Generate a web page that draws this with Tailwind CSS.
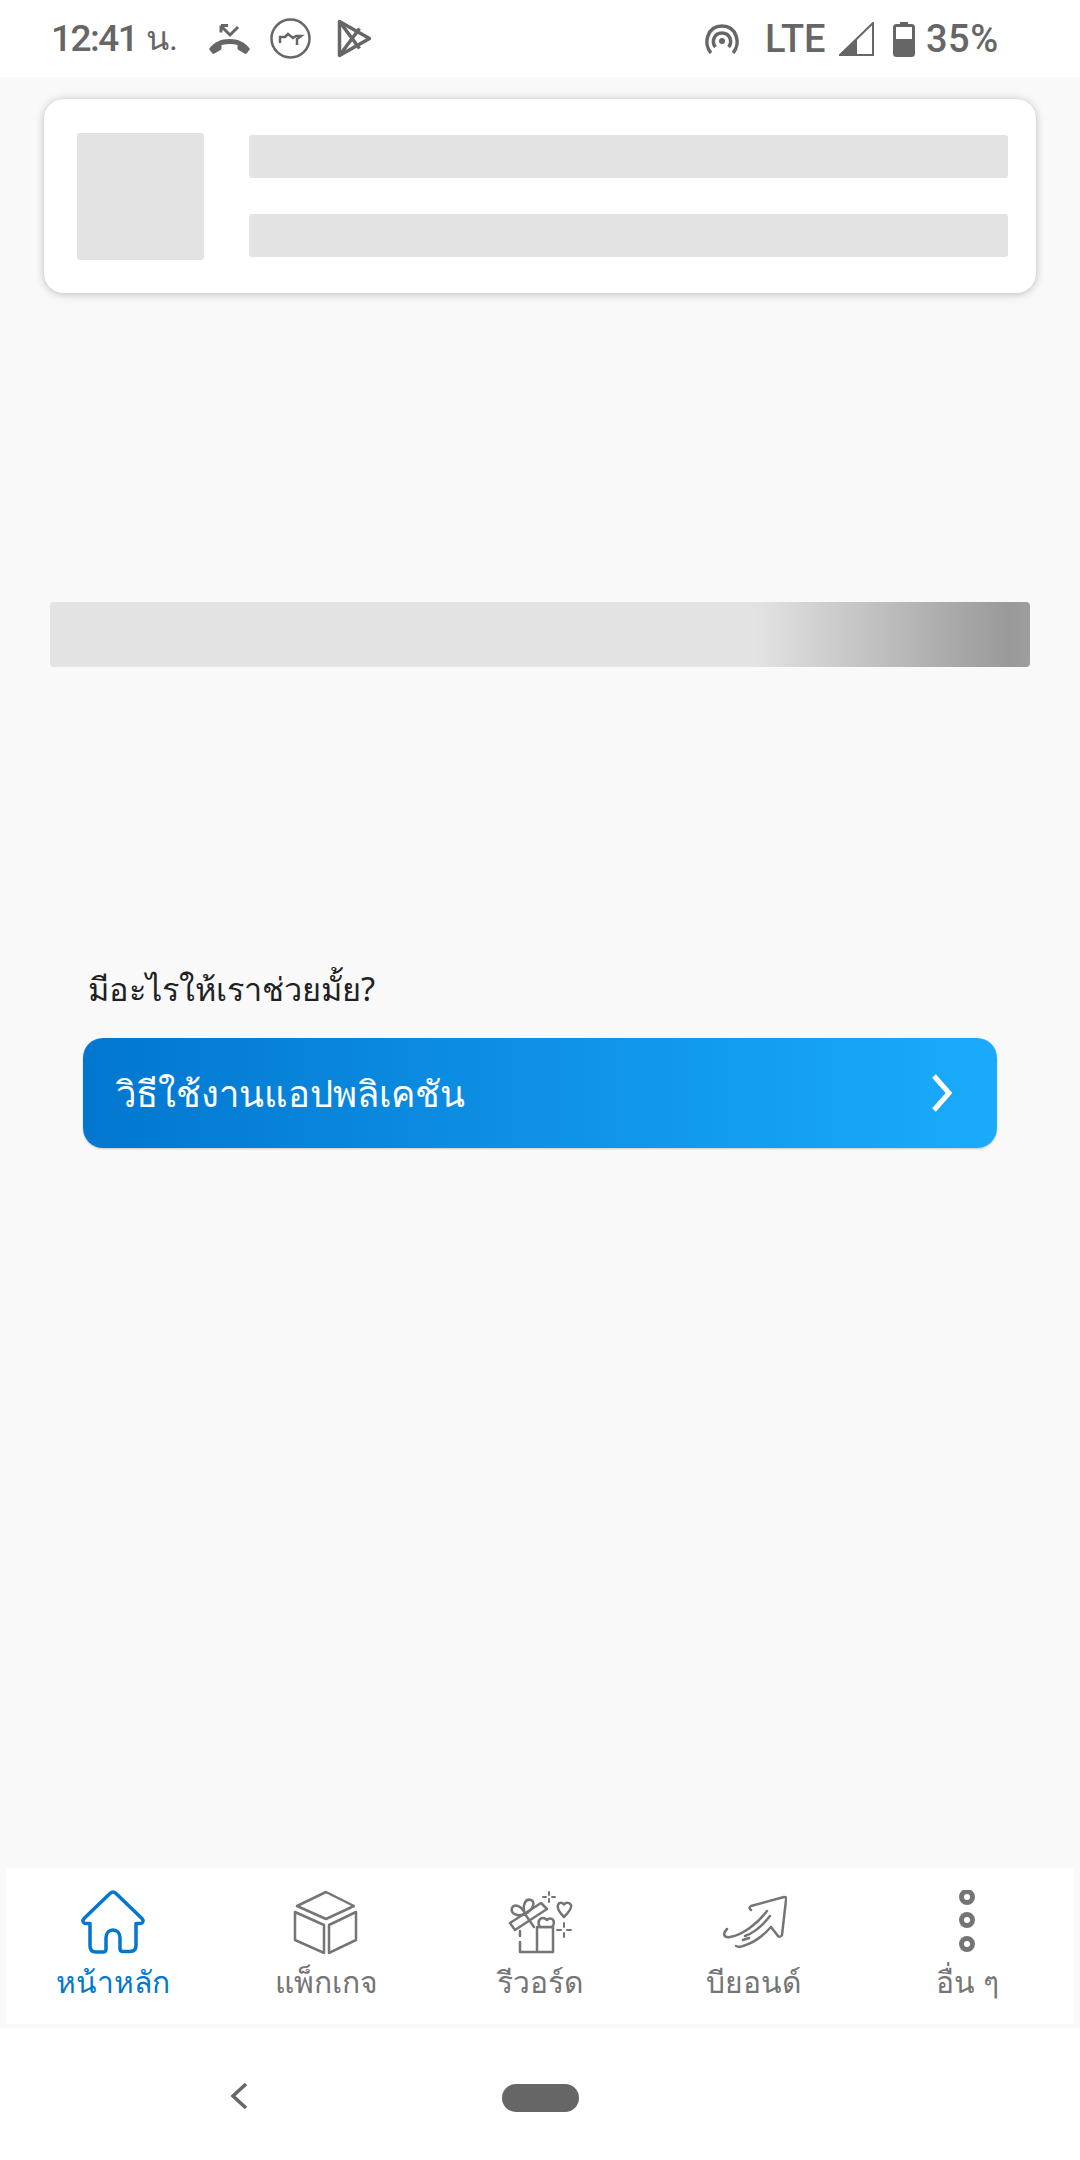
<!DOCTYPE html>
<html lang="th">
<head>
  <meta charset="UTF-8">
  <meta name="viewport" content="width=device-width, initial-scale=1">
  <title>Home loading</title>
  <script src="https://cdn.jsdelivr.net/npm/@tailwindcss/browser@4"></script>
</head>
<body class="bg-white">
<div class="w-[1080px] h-[2160px] flex flex-col bg-[#f9f9f9] overflow-hidden font-['Noto_Sans','Roboto',sans-serif]">

  <!-- Status bar -->
  <div class="h-[77px] bg-white flex items-center justify-between pl-[51px] pr-[78px] text-[#666666] font-['Roboto',sans-serif] shrink-0">
    <div class="flex items-center">
      <span class="w-[87px] text-[37px] font-medium tracking-[-1.500px] whitespace-nowrap">12:41</span>
      <span class="text-[34px] ml-[8px] w-[63px]">น.</span>
      <!-- missed call -->
      <svg class="w-[41px] h-[30px]" viewBox="0 0 41 30">
        <path d="M0 25c5-7 12-10 20.500-10S36 18 41 25l-3 4c-.5 1-1.500 1-2.500.5l-6-3.500c-.8-.5-1-1.200-1-2v-3c-5-1.500-10-1.500-16 0v3c0 .8-.2 1.500-1 2l-6 3.500c-1 .5-2 .5-2.500-.5z" fill="#666666"/>
        <path d="M12 2l9 9 8-8M12 1.500h7M12 1.500v7" fill="none" stroke="#666666" stroke-width="3"/>
      </svg>
      <!-- messenger -->
      <svg class="ml-[20px] w-[41px] h-[41px]" viewBox="0 0 41 41" fill="none" stroke="#666666" stroke-width="2.500">
        <circle cx="20.500" cy="20.500" r="19"/>
        <path d="M10 25v-6h5l3-3 5 4 3-2h5l-4 3v6"/>
      </svg>
      <!-- play store -->
      <svg class="ml-[26px] w-[35px] h-[39px]" viewBox="0 0 35 39" fill="none" stroke="#666666" stroke-width="3.500" stroke-linejoin="round">
        <path d="M2.500 2.500l30 17-30 17z"/>
        <path d="M2.500 2.500l20 27M2.500 36.500l20-27"/>
      </svg>
    </div>
    <div class="flex items-center">
      <!-- hotspot -->
      <svg class="w-[36px] h-[30px]" viewBox="0 0 36 30" fill="none" stroke="#666666" stroke-width="3.500">
        <path d="M7 29C-1 20 3 2 18 2s19 18 11 27"/>
        <path d="M11.500 23C7 18 10 9 18 9s11 9 6.500 14"/>
        <circle cx="18" cy="17" r="3" fill="#666666" stroke="none"/>
      </svg>
      <span class="ml-[25px] w-[62px] text-[38px] font-medium leading-none">LTE</span>
      <svg class="ml-[12px] w-[35px] h-[34px]" viewBox="0 0 35 34">
        <path d="M34 1v32H1z" fill="none" stroke="#666666" stroke-width="2"/>
        <path d="M18 17v16H1z" fill="#666666"/>
      </svg>
      <svg class="ml-[19px] w-[22px] h-[36px]" viewBox="0 0 22 36">
        <path d="M7 1h8v3h-8z" fill="#666666"/>
        <rect x="1.500" y="4.500" width="19" height="30" rx="2" fill="none" stroke="#666666" stroke-width="3"/>
        <rect x="1" y="18" width="20" height="17" rx="2" fill="#666666"/>
      </svg>
      <span class="ml-[11px] w-[76px] text-[38px] font-medium leading-none tracking-[0.5px] whitespace-nowrap">35%</span>
    </div>
  </div>

  <!-- Profile skeleton card -->
  <div class="mt-[22px] mx-[44px] h-[194px] bg-white rounded-[20px] shadow-[0_1px_8px_rgba(0,0,0,0.25)] flex items-center pl-[33px] pr-[28px] shrink-0">
    <div class="w-[127px] h-[127px] bg-[#e3e3e3] rounded-[3px] shrink-0"></div>
    <div class="ml-[45px] flex-1 flex flex-col gap-[36px]">
      <div class="h-[43px] bg-[#e3e3e3] rounded-[3px]"></div>
      <div class="h-[43px] bg-[#e3e3e3] rounded-[3px]"></div>
    </div>
  </div>

  <!-- Banner skeleton -->
  <div class="mt-[309px] mx-[50px] h-[65px] rounded-[4px] bg-[linear-gradient(90deg,#e3e3e3_0%,#e3e3e3_72%,#999999_98%,#9e9e9e_100%)] shrink-0"></div>

  <!-- Help section -->
  <div class="mt-[300px] ml-[88px] text-[32.500px] leading-[44px] text-[#212121] shrink-0">มีอะไรให้เราช่วยมั้ย?</div>
  <div class="mt-[27px] mx-[83px] h-[110px] rounded-[20px] bg-[linear-gradient(90deg,#0277cf_0%,#1aabfd_100%)] shadow-[0_1px_2px_rgba(0,0,0,0.2)] flex items-center justify-between pl-[33px] pr-[44px] shrink-0">
    <span class="text-[36.500px] text-white">วิธีใช้งานแอปพลิเคชัน</span>
    <svg class="w-[22px] h-[38px]" viewBox="0 0 22 38" fill="none" stroke="#ffffff" stroke-width="5">
      <path d="M3 2l15 17L3 36"/>
    </svg>
  </div>

  <!-- Bottom tab bar -->
  <div class="mt-auto mx-[6px] h-[156px] bg-white grid grid-cols-5 shrink-0 text-[#757575] text-[30px]">
    <div class="flex flex-col items-center pt-[22px]">
      <svg class="w-[66px] h-[64px]" viewBox="0 0 66 64" fill="none" stroke="#0277cf" stroke-width="3.500" stroke-linejoin="round">
        <path d="M33 2c1 0 2 .5 3 1.500l26 25c2 2 1 5-2 5h-4v22c0 4-2 6-6 6h-7c-2 0-3-1-3-3V48c0-5-3-8-7-8s-7 3-7 8v11c0 2-1 3-3 3h-7c-4 0-6-2-6-6V33.500H6c-3 0-4-3-2-5l26-25C31 2.500 32 2 33 2z"/>
      </svg>
      <span class="text-[#0277cf] leading-[38px] mt-[9px]">หน้าหลัก</span>
    </div>
    <div class="flex flex-col items-center pt-[22px]">
      <svg class="w-[66px] h-[64px]" viewBox="0 0 66 64" fill="none" stroke="#757575" stroke-width="2.500" stroke-linejoin="round">
        <path d="M33 2l28 14-28 13L4 16z"/>
        <path d="M2 22l29 13v28L2 50z"/>
        <path d="M63 22L36 35v28l27-13z"/>
      </svg>
      <span class="leading-[38px] mt-[9px]">แพ็กเกจ</span>
    </div>
    <div class="flex flex-col items-center pt-[22px]">
      <svg class="w-[66px] h-[64px]" viewBox="0 0 66 64" fill="none" stroke="#757575" stroke-width="2.500" stroke-linecap="round" stroke-linejoin="round">
        <path d="M3 33l31-20 6 6-32 21z"/>
        <path d="M18 24c-7 3-15 0-13-6 2-5 10-2 13 6zM18 24c-3-8 0-16 6-14 5 2 2 10-6 14zM18 24l9 13"/>
        <path d="M13 41v5M13 52v10h33V37H30M30 38v24"/>
        <path d="M33 37c-3-4-1-9 3-9 2 0 3 1 4 2 1-1 3-2 5-1 3 2 2 6 0 8z" fill="#ffffff"/>
        <path d="M57 27c-5-5-7-9-6-12 1-3 4-3 6-.5 2-2.500 6-2 7 .5 1 3-2 7-7 12z"/>
        <path d="M42 2v3M42 9v3M36 7h3M45 7h3M57 33v4M57 43v4M50 40h4M60 40h4" stroke-width="2"/>
      </svg>
      <span class="leading-[38px] mt-[9px]">รีวอร์ด</span>
    </div>
    <div class="flex flex-col items-center pt-[22px]">
      <svg class="w-[66px] h-[64px]" viewBox="0 0 66 64" fill="none" stroke="#757575" stroke-width="2.500" stroke-linecap="round" stroke-linejoin="round">
        <path d="M30 20c-2-2-2-3 0-4l33-9c2 0 3 1 2 3l-4 35c-1 2-3 2-4 1l-7-9"/>
        <path d="M6 39c-5 5-3 9 3 8 13-2 28-14 37-26"/>
        <path d="M24 46c8-3 18-11 25-20"/>
        <path d="M15 56c2 1 5 1 7 0 10-3 19-9 27-18M22 50l6-2"/>
      </svg>
      <span class="leading-[38px] mt-[9px]">บียอนด์</span>
    </div>
    <div class="flex flex-col items-center pt-[22px]">
      <svg class="w-[66px] h-[64px]" viewBox="0 0 66 64" fill="none" stroke="#757575" stroke-width="5">
        <circle cx="33" cy="7" r="5.500"/>
        <circle cx="33" cy="30" r="5.500"/>
        <circle cx="33" cy="54" r="5.500"/>
      </svg>
      <span class="leading-[38px] mt-[9px]">อื่น ๆ</span>
    </div>
  </div>

  <!-- Android nav bar -->
  <div class="mt-[4px] h-[132px] bg-white flex items-start shrink-0 relative">
    <svg class="ml-[230px] mt-[54px] w-[18px] h-[28px]" viewBox="0 0 18 28" fill="none" stroke="#666666" stroke-width="3.500">
      <path d="M16 2L3 14l13 12"/>
    </svg>
    <div class="ml-[254px] mt-[56px] w-[77px] h-[28px] rounded-full bg-[#666666]"></div>
  </div>
</div>
</body>
</html>
